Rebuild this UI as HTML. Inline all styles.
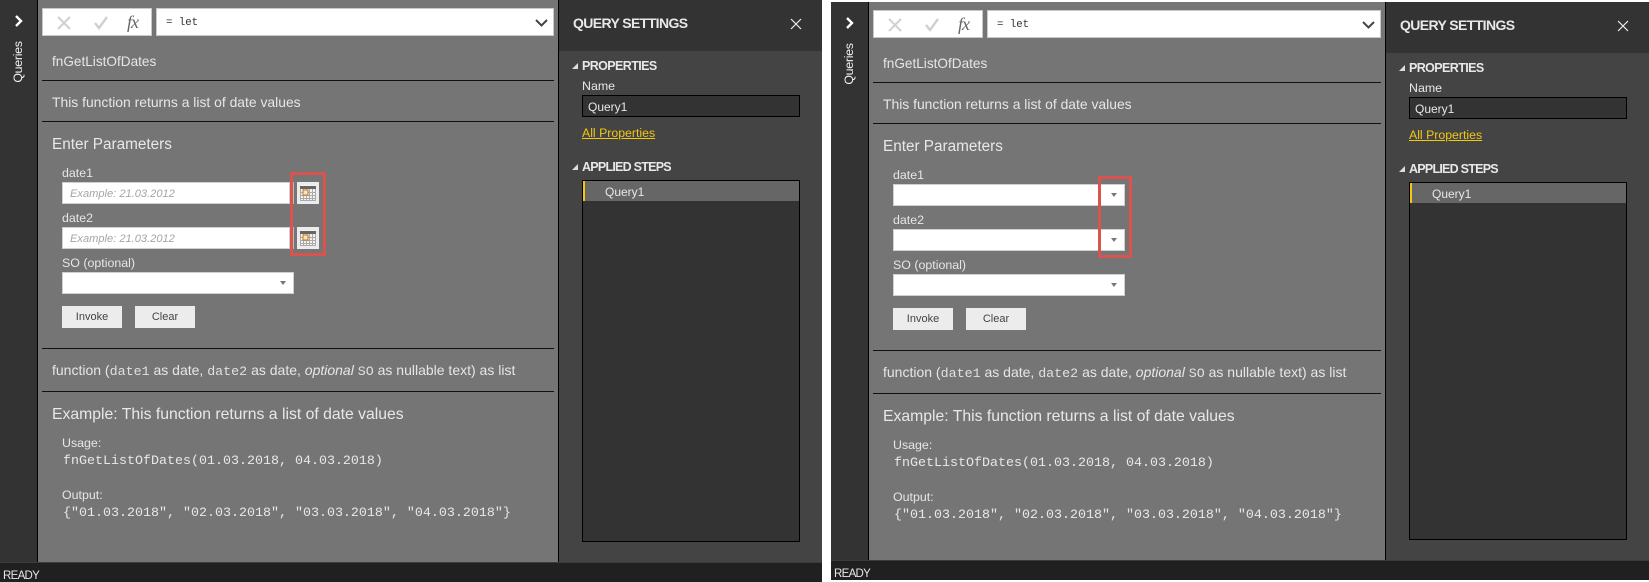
<!DOCTYPE html>
<html><head><meta charset="utf-8"><style>
html,body{margin:0;padding:0;width:1649px;height:582px;overflow:hidden;background:#fff}
*{box-sizing:border-box}
.p{position:absolute;overflow:hidden;background:#757575;font-family:"Liberation Sans",sans-serif;color:#e6e6e6}
.p div,.p svg,.p a{position:absolute;white-space:nowrap}
.side{left:0;top:0;width:38px;bottom:0;background:#333;border-right:1px solid #000}
.q{font-size:12.4px;letter-spacing:-.3px;color:#f4f4f4;transform:rotate(-90deg);transform-origin:center;width:60px;height:16px;line-height:16px;text-align:center}
.box{background:#fff;border:1px solid #c8c8c8}
.ln{left:42px;height:1px;background:#111}
.t{font-size:13.9px;line-height:18px;height:18px}
.h{font-size:15.3px;line-height:20px;height:20px;color:#e8e8e8}
.l{font-size:12.4px;line-height:16px;height:16px;left:62px;color:#e6e6e6}
.m{font-family:"Liberation Mono",monospace;font-size:13.33px;line-height:16px;height:16px;color:#e8e8e8}
.in{left:62px;height:22px;background:#fff;border:1px solid #cfcfcf}
.ph{font-size:11.1px;font-style:italic;color:#a5a5a5;line-height:22px;left:7px;top:0}
.btn{height:22px;width:60px;background:#ececec;color:#444;font-size:11px;line-height:23px;text-align:center;top:0}
.bar{left:0;right:0;background:#202020;border-top:1px solid #3c3c3c}
.r{background:#444;font-family:"Liberation Sans",sans-serif;color:#e8e8e8;position:absolute;overflow:hidden}
.r div,.r svg,.r a{position:absolute;white-space:nowrap}
.mi{font-family:"Liberation Mono",monospace;font-size:10.7px;color:#333;line-height:14px;top:7px}
code{font-family:"Liberation Mono",monospace;font-size:13.33px;color:#e0e0e0}
.tri{width:0;height:0;border-left:6px solid transparent;border-bottom:6px solid #ddd}
.ar{width:0;height:0;border-left:3.5px solid transparent;border-right:3.5px solid transparent;border-top:4px solid #777}
.red{border:3px solid #d9534f}
.qs{left:14px;top:14px;font-size:14px;letter-spacing:-.6px;font-weight:bold;line-height:18px;color:#e8e8e8}
.ps{left:23px;font-size:12.5px;font-weight:bold;line-height:16px}
.rd{font-size:11.5px;letter-spacing:-.7px;line-height:14px;color:#e8e8e8;left:3px}
</style></head><body>

<!-- LEFT -->
<div class="p" style="left:0;top:0;width:559px;height:582px">
 <div class="side"></div>
 <svg style="left:13px;top:14px" width="12" height="14" viewBox="0 0 12 14"><path d="M3 2l5 5-5 5" fill="none" stroke="#fff" stroke-width="2.4"/></svg>
 <div class="q" style="left:-12px;top:54px">Queries</div>
 <div style="right:0;top:0;width:1px;height:562px;background:#000"></div>
 <div class="box" style="left:42px;top:8px;width:110px;height:28px">
  <svg style="left:13px;top:6px" width="16" height="16" viewBox="0 0 16 16"><path d="M2 2l12 12M14 2L2 14" stroke="#d0d0d0" stroke-width="2" fill="none"/></svg>
  <svg style="left:50px;top:6px" width="16" height="16" viewBox="0 0 16 16"><path d="M2 8l4 5 8-11" stroke="#d0d0d0" stroke-width="2.4" fill="none"/></svg>
  <div style="left:84px;top:2px;font:italic 18px/22px 'Liberation Serif',serif;color:#666;letter-spacing:-1px">fx</div>
 </div>
 <div class="box" style="left:156px;top:8px;width:398px;height:28px">
  <div class="mi" style="left:9px">= let</div>
  <svg style="left:378px;top:9px" width="13" height="10" viewBox="0 0 13 10"><path d="M1 2l5.500 5.500L12 2" stroke="#444" stroke-width="2" fill="none"/></svg>
 </div>
 <div class="t" style="left:52px;top:53px;font-size:13.6px">fnGetListOfDates</div>
 <div class="ln" style="top:80px;width:512px"></div>
 <div class="t" style="left:52px;top:93px">This function returns a list of date values</div>
 <div class="ln" style="top:121px;width:512px"></div>
 <div class="h" style="left:52px;top:135px">Enter Parameters</div>
 <div class="l" style="top:165px">date1</div>
 <div class="in" style="top:182px;width:228px"><div class="ph">Example: 21.03.2012</div></div>
 <div style="left:293px;top:182px;width:1px;height:22px;background:#bbb"></div>
 <div style="left:297px;top:182px;width:22px;height:22px;background:#ececec">
  <svg style="left:3px;top:3px" width="16" height="16" viewBox="0 0 16 16"><rect width="16" height="16" fill="#f2f2f2"/><rect x="0" y="1" width="16" height="3" fill="#666"/><path d="M.5 4v12M3.500 4v12M6.500 4v12M9.500 4v12M12.500 4v12M15.500 4v12M0 7.500h16M0 10.500h16M0 13.500h16M0 15.500h16" stroke="#aaa" stroke-width="1" fill="none"/><rect x="3" y="5" width="5" height="5" fill="#f5e6c8" stroke="#c97a1a"/></svg>
 </div>
 <div class="l" style="top:210px">date2</div>
 <div class="in" style="top:227px;width:228px"><div class="ph">Example: 21.03.2012</div></div>
 <div style="left:293px;top:227px;width:1px;height:22px;background:#bbb"></div>
 <div style="left:297px;top:227px;width:22px;height:22px;background:#ececec">
  <svg style="left:3px;top:3px" width="16" height="16" viewBox="0 0 16 16"><rect width="16" height="16" fill="#f2f2f2"/><rect x="0" y="1" width="16" height="3" fill="#666"/><path d="M.5 4v12M3.500 4v12M6.500 4v12M9.500 4v12M12.500 4v12M15.500 4v12M0 7.500h16M0 10.500h16M0 13.500h16M0 15.500h16" stroke="#aaa" stroke-width="1" fill="none"/><rect x="3" y="5" width="5" height="5" fill="#f5e6c8" stroke="#c97a1a"/></svg>
 </div>
 <div class="red" style="left:290px;top:172px;width:36px;height:84px"></div>
 <div class="l" style="top:255px">SO (optional)</div>
 <div class="in" style="top:272px;width:232px"><div class="ar" style="left:217px;top:8px"></div></div>
 <div style="left:62px;top:306px;width:140px;height:22px">
  <div class="btn" style="left:0">Invoke</div><div class="btn" style="left:73px">Clear</div>
 </div>
 <div class="ln" style="top:348px;width:512px"></div>
 <div class="t" style="left:52px;top:361px;font-size:14px">function (<code>date1</code> as date, <code>date2</code> as date, <i>optional</i> <code>SO</code> as nullable text) as list</div>
 <div class="ln" style="top:391px;width:512px"></div>
 <div class="h" style="left:52px;top:405px;font-size:15.75px">Example: This function returns a list of date values</div>
 <div class="l" style="top:435px">Usage:</div>
 <div class="m" style="left:63px;top:454px">fnGetListOfDates(01.03.2018, 04.03.2018)</div>
 <div class="l" style="top:487px">Output:</div>
 <div class="m" style="left:63px;top:506px">{"01.03.2018", "02.03.2018", "03.03.2018", "04.03.2018"}</div>
 <div class="bar" style="top:562px;height:20px"></div>
 <div class="rd" style="top:569px">READY</div>
</div>
<div class="r" style="left:559px;top:0;width:263px;height:582px">
 <div style="left:0;top:0;width:263px;height:51px;background:#333"></div>
 <div class="qs">QUERY SETTINGS</div>
 <svg style="left:230px;top:17px" width="14" height="14" viewBox="0 0 14 14"><path d="M2 2l10 10M12 2L2 12" stroke="#eee" stroke-width="1.200" fill="none"/></svg>
 <div class="tri" style="left:13px;top:63px"></div>
 <div class="ps" style="top:58px;letter-spacing:-.6px">PROPERTIES</div>
 <div style="left:23px;top:78px;font-size:12.400px;line-height:16px">Name</div>
 <div style="left:23px;top:95px;width:218px;height:22px;background:#333;border:1px solid #000"></div>
 <div style="left:29px;top:99px;font-size:12px;line-height:16px">Query1</div>
 <div style="left:23px;top:125px;font-size:12.300px;line-height:16px;color:#f2c811;text-decoration:underline">All Properties</div>
 <div class="tri" style="left:13px;top:164px"></div>
 <div class="ps" style="top:159px;letter-spacing:-.75px">APPLIED STEPS</div>
 <div style="left:23px;top:180px;width:218px;height:362px;background:#333;border:1px solid #000"></div>
 <div style="left:24px;top:181px;width:216px;height:20px;background:#666;border-left:2px solid #f2c811"></div>
 <div style="left:46px;top:184px;font-size:12px;line-height:16px">Query1</div>
 <div style="left:0;top:562px;width:263px;height:20px;background:#202020;border-top:1px solid #3c3c3c"></div>
</div>

<!-- RIGHT -->
<div class="p" style="left:831px;top:2px;width:555px;height:578px">
 <div class="side"></div>
 <svg style="left:13px;top:14px" width="12" height="14" viewBox="0 0 12 14"><path d="M3 2l5 5-5 5" fill="none" stroke="#fff" stroke-width="2.4"/></svg>
 <div class="q" style="left:-12px;top:54px">Queries</div>
 <div style="right:0;top:0;width:1px;height:558px;background:#000"></div>
 <div class="box" style="left:42px;top:8px;width:110px;height:28px">
  <svg style="left:13px;top:6px" width="16" height="16" viewBox="0 0 16 16"><path d="M2 2l12 12M14 2L2 14" stroke="#d0d0d0" stroke-width="2" fill="none"/></svg>
  <svg style="left:50px;top:6px" width="16" height="16" viewBox="0 0 16 16"><path d="M2 8l4 5 8-11" stroke="#d0d0d0" stroke-width="2.4" fill="none"/></svg>
  <div style="left:84px;top:2px;font:italic 18px/22px 'Liberation Serif',serif;color:#666;letter-spacing:-1px">fx</div>
 </div>
 <div class="box" style="left:156px;top:8px;width:394px;height:28px">
  <div class="mi" style="left:9px">= let</div>
  <svg style="left:374px;top:9px" width="13" height="10" viewBox="0 0 13 10"><path d="M1 2l5.500 5.500L12 2" stroke="#444" stroke-width="2" fill="none"/></svg>
 </div>
 <div class="t" style="left:52px;top:53px;font-size:13.6px">fnGetListOfDates</div>
 <div class="ln" style="top:80px;width:508px"></div>
 <div class="t" style="left:52px;top:93px">This function returns a list of date values</div>
 <div class="ln" style="top:121px;width:508px"></div>
 <div class="h" style="left:52px;top:135px">Enter Parameters</div>
 <div class="l" style="top:165px">date1</div>
 <div class="in" style="top:182px;width:232px"><div class="ar" style="left:217px;top:8px"></div></div>
 <div class="l" style="top:210px">date2</div>
 <div class="in" style="top:227px;width:232px"><div class="ar" style="left:217px;top:8px"></div></div>
 <div class="red" style="left:267px;top:174px;width:34px;height:82px"></div>
 <div class="l" style="top:255px">SO (optional)</div>
 <div class="in" style="top:272px;width:232px"><div class="ar" style="left:217px;top:8px"></div></div>
 <div style="left:62px;top:306px;width:140px;height:22px">
  <div class="btn" style="left:0">Invoke</div><div class="btn" style="left:73px">Clear</div>
 </div>
 <div class="ln" style="top:348px;width:508px"></div>
 <div class="t" style="left:52px;top:361px;font-size:14px">function (<code>date1</code> as date, <code>date2</code> as date, <i>optional</i> <code>SO</code> as nullable text) as list</div>
 <div class="ln" style="top:391px;width:508px"></div>
 <div class="h" style="left:52px;top:405px;font-size:15.75px">Example: This function returns a list of date values</div>
 <div class="l" style="top:435px">Usage:</div>
 <div class="m" style="left:63px;top:454px">fnGetListOfDates(01.03.2018, 04.03.2018)</div>
 <div class="l" style="top:487px">Output:</div>
 <div class="m" style="left:63px;top:506px">{"01.03.2018", "02.03.2018", "03.03.2018", "04.03.2018"}</div>
 <div class="bar" style="top:558px;height:20px"></div>
 <div class="rd" style="top:565px">READY</div>
</div>
<div class="r" style="left:1386px;top:2px;width:263px;height:578px">
 <div style="left:0;top:0;width:263px;height:51px;background:#333"></div>
 <div class="qs">QUERY SETTINGS</div>
 <svg style="left:230px;top:17px" width="14" height="14" viewBox="0 0 14 14"><path d="M2 2l10 10M12 2L2 12" stroke="#eee" stroke-width="1.200" fill="none"/></svg>
 <div class="tri" style="left:13px;top:63px"></div>
 <div class="ps" style="top:58px;letter-spacing:-.6px">PROPERTIES</div>
 <div style="left:23px;top:78px;font-size:12.400px;line-height:16px">Name</div>
 <div style="left:23px;top:95px;width:218px;height:22px;background:#333;border:1px solid #000"></div>
 <div style="left:29px;top:99px;font-size:12px;line-height:16px">Query1</div>
 <div style="left:23px;top:125px;font-size:12.300px;line-height:16px;color:#f2c811;text-decoration:underline">All Properties</div>
 <div class="tri" style="left:13px;top:164px"></div>
 <div class="ps" style="top:159px;letter-spacing:-.75px">APPLIED STEPS</div>
 <div style="left:23px;top:180px;width:218px;height:358px;background:#333;border:1px solid #000"></div>
 <div style="left:24px;top:181px;width:216px;height:20px;background:#666;border-left:2px solid #f2c811"></div>
 <div style="left:46px;top:184px;font-size:12px;line-height:16px">Query1</div>
 <div style="left:0;top:558px;width:263px;height:20px;background:#202020;border-top:1px solid #3c3c3c"></div>
</div>
</body></html>
